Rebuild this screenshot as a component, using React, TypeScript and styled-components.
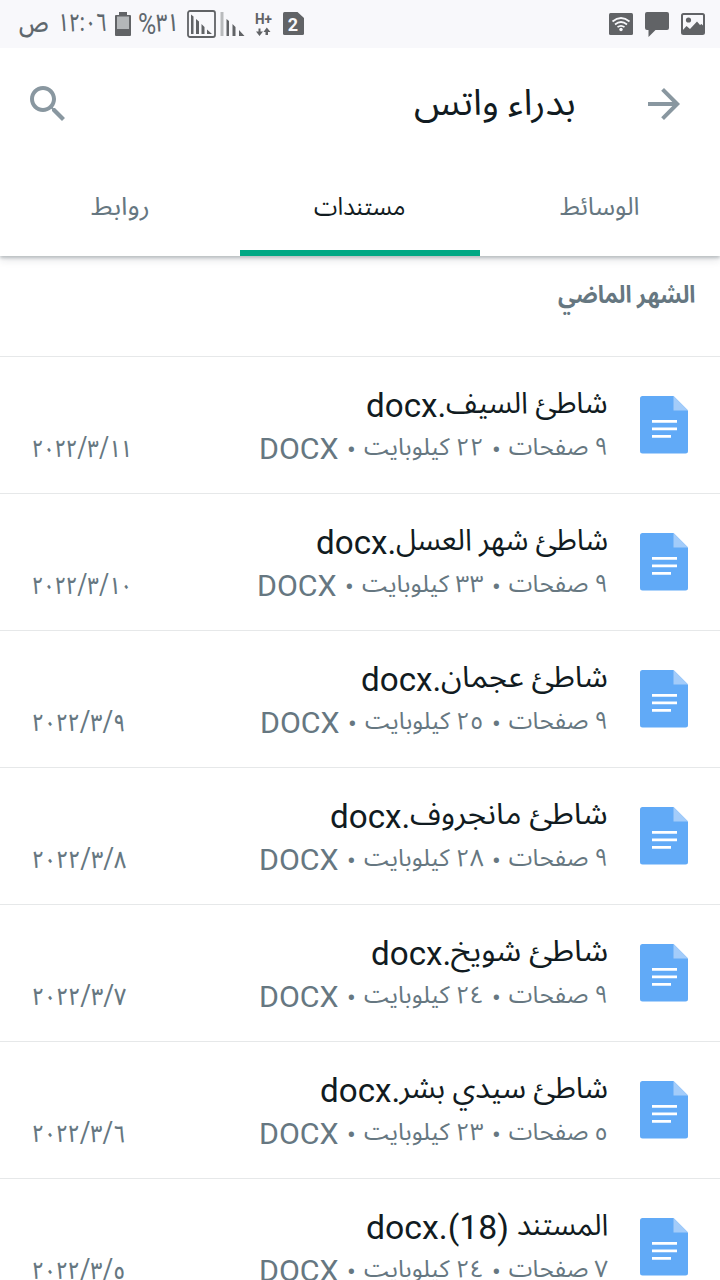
import React, { useLayoutEffect, useRef } from 'react';
import styled, { createGlobalStyle } from 'styled-components';

const Global = createGlobalStyle`
  * { box-sizing: border-box; }
  html, body { margin: 0; padding: 0; background: #fff; }
  body { font-family: Roboto, "Noto Sans Arabic", "Noto Naskh Arabic", "DejaVu Sans", sans-serif; overflow: hidden; }
`;

const Screen = styled.div`
  width: 720px; height: 1280px; overflow: hidden; background: #fff; direction: rtl;
  display: flex; flex-direction: column;
`;

const FitBox = styled.span<{ $w: number; $size?: number; $raise?: number; $spacing?: number }>`
  display: inline-block; flex: none; white-space: nowrap;
  width: ${p => p.$w}px;
  ${p => (p.$size ? `font-size: ${p.$size}px;` : '')}
  vertical-align: ${p => p.$raise || 0}px;
  letter-spacing: ${p => (p.$spacing ? `${p.$spacing}px` : 'normal')};
`;
const FitInner = styled.span`display: inline-block; transform-origin: 100% 50%;`;

type FitProps = { w: number; size?: number; raise?: number; spacing?: number; children: React.ReactNode };

// Squeezes or stretches a run of text to the given width.
function Fit({ w, size, raise, spacing, children }: FitProps) {
  const ref = useRef<HTMLSpanElement>(null);
  useLayoutEffect(() => {
    const el = ref.current;
    if (el && el.offsetWidth) el.style.transform = `scaleX(${w / el.offsetWidth})`;
  }, [w]);
  return (
    <FitBox $w={w} $size={size} $raise={raise} $spacing={spacing}>
      <FitInner ref={ref}>{children}</FitInner>
    </FitBox>
  );
}

const StatusBar = styled.div`
  height: 48px; flex: none; background: #f8f8fb; color: #616366; position: relative; z-index: 2;
  display: flex; align-items: center; justify-content: space-between; padding: 0 15px 0 19px;
`;
const Cluster = styled.div<{ $gap?: number }>`
  display: flex; align-items: center; height: 48px; gap: ${p => p.$gap || 0}px;
`;
const Slot = styled.div<{ $after: number }>`
  display: flex; flex: none; align-items: center; margin-left: ${p => p.$after}px;
`;
const StatusText = styled.div<{ $after: number }>`
  font-size: 25px; line-height: 46px; height: 48px; color: #5f686e; white-space: nowrap;
  font-weight: 500; margin-left: ${p => p.$after}px;
`;
const Percent = styled.span`font-weight: 400;`;
const Header = styled.header`
  height: 208px; flex: none; background: #fff; position: relative; z-index: 1;
  box-shadow: 0 2px 3px rgba(30,45,55,.24), 0 4px 8px rgba(30,45,55,.12);
`;
const TitleRow = styled.div`
  height: 112px; display: flex; align-items: center; padding: 0 32px 0 24px; color: #8997a0;
`;
const Title = styled.h1`
  flex: 1; margin: -3px 64px 0 0; font-size: 36px; line-height: 48px; font-weight: 400; color: #111b21;
`;
const Tabs = styled.nav`display: grid; grid-template-columns: repeat(3, 1fr); height: 96px;`;
const Tab = styled.div<{ $active?: boolean }>`
  display: flex; align-items: center; justify-content: center; font-size: 25px; padding-top: 4px;
  color: ${p => (p.$active ? '#111b21' : '#667781')};
  border-bottom: 6px solid ${p => (p.$active ? '#00a884' : 'transparent')};
`;
const Section = styled.h2`
  margin: 0; height: 100px; flex: none; padding: 20px 25px 0; font-size: 24px; line-height: 38px;
  font-weight: 700; color: #667781;
`;
const Row = styled.div`
  height: 137px; flex: none; border-top: 1px solid #e6e8e9; display: flex; padding: 39px 32px 0;
`;
const DocSvg = styled.svg`flex: none; display: block;`;
const Info = styled.div`flex: 1; margin: -15px 32px 0 0;`;
const Name = styled.div`font-size: 34px; line-height: 44px; height: 47px; color: #111b21; white-space: nowrap;`;
const Meta = styled.div`
  font-size: 30px; line-height: 38px; height: 38px; color: #667781; white-space: nowrap;
  display: flex; justify-content: space-between;
`;
const Dot = styled.span`
  display: inline-block; width: 25px; text-align: center; font-size: 26px;
`;
const DateText = styled.span`font-size: 24px; font-weight: 500;`;
const Slash = styled.span`font-size: 30px; font-weight: 400;`;

type Doc = {
  name: string; nameW: number; ext: string; extW: number;
  pages: string; size: string; sizeW: number; date: string[]; dateW: number;
};
const docs: Doc[] = [
  { name: 'شاطئ السيف', nameW: 162, ext: '.docx', extW: 80, pages: '٩', size: '٢٢', sizeW: 120, date: ['٢٠٢٢', '٣', '١١'], dateW: 100 },
  { name: 'شاطئ شهر العسل', nameW: 212, ext: '.docx', extW: 80, pages: '٩', size: '٣٣', sizeW: 122, date: ['٢٠٢٢', '٣', '١٠'], dateW: 100 },
  { name: 'شاطئ عجمان', nameW: 167, ext: '.docx', extW: 80, pages: '٩', size: '٢٥', sizeW: 119, date: ['٢٠٢٢', '٣', '٩'], dateW: 93 },
  { name: 'شاطئ مانجروف', nameW: 198, ext: '.docx', extW: 80, pages: '٩', size: '٢٨', sizeW: 120, date: ['٢٠٢٢', '٣', '٨'], dateW: 94 },
  { name: 'شاطئ شويخ', nameW: 157, ext: '.docx', extW: 80, pages: '٩', size: '٢٤', sizeW: 120, date: ['٢٠٢٢', '٣', '٧'], dateW: 94 },
  { name: 'شاطئ سيدي بشر', nameW: 208, ext: '.docx', extW: 80, pages: '٥', size: '٢٣', sizeW: 120, date: ['٢٠٢٢', '٣', '٦'], dateW: 93 },
  { name: 'المستند', nameW: 91, ext: '(18).docx', extW: 143, pages: '٧', size: '٢٤', sizeW: 120, date: ['٢٠٢٢', '٣', '٥'], dateW: 93 },
];

const DocIcon = () => (
  <DocSvg width="48" height="58" viewBox="0 0 48 58">
    <path d="M2.500 0H33.500L48 14.500V55Q48 57.500 45.500 57.500H2.500Q0 57.500 0 55V2.500Q0 0 2.500 0Z" fill="#61aaf7" />
    <path d="M33.500 0L48 14.500H33.500Z" fill="#a3ccfa" />
    <path d="M12 25.300H37M12 32.800H37M12 40.300H31" stroke="#fff" strokeWidth="2.800" />
  </DocSvg>
);

const Arrow = () => (
  <svg width="48" height="48" viewBox="0 0 24 24" fill="currentColor">
    <path d="M12 4l-1.410 1.410L16.170 11H4v2h12.170l-5.580 5.590L12 20l8-8z" />
  </svg>
);
const Search = () => (
  <svg width="48" height="48" viewBox="0 0 24 24" fill="currentColor">
    <path d="M15.500 14h-.79l-.28-.27C15.410 12.590 16 11.110 16 9.500 16 5.910 13.090 3 9.500 3S3 5.910 3 9.500 5.910 16 9.500 16c1.610 0 3.090-.59 4.230-1.570l.27.28v.79l5 4.990L20.490 19l-4.990-5zm-6 0C7.010 14 5 11.990 5 9.500S7.010 5 9.500 5 14 7.010 14 9.500 11.990 14 9.500 14z" />
  </svg>
);

const PictureIcon = () => (
  <svg width="24" height="28" viewBox="0 0 24 28">
    <rect x="1" y="4" width="22" height="20" rx="1.500" fill="none" stroke="currentColor" strokeWidth="2" />
    <circle cx="7.500" cy="10" r="2.600" fill="currentColor" />
    <path d="M1 21L5.500 16L9 19L16 11.500L19 15L20.500 14L23 16.500V24H1Z" fill="currentColor" />
  </svg>
);
const ChatIcon = () => (
  <svg width="24" height="28" viewBox="0 0 24 28">
    <path d="M2 2H22Q24 2 24 4V18Q24 20 22 20H10.500L3.500 27V20H2Q0 20 0 18V4Q0 2 2 2Z" fill="currentColor" />
  </svg>
);
const WifiIcon = () => (
  <svg width="24" height="28" viewBox="0 0 24 28">
    <rect x="0" y="3" width="24" height="22" rx="1.500" fill="currentColor" />
    <g fill="none" stroke="#f8f8fb" strokeWidth="1.700">
      <path d="M3.500 11.500Q12 4.500 20.500 11.500" />
      <path d="M6 14.500Q12 9.500 18 14.500" />
      <path d="M8.500 17.200Q12 14.500 15.500 17.200" />
    </g>
    <circle cx="12" cy="19.500" r="1.700" fill="#f8f8fb" />
  </svg>
);
const SimIcon = () => (
  <svg width="21" height="24" viewBox="0 0 21 24">
    <path d="M1.500 0H14.500L21 6V21.500Q21 23 19.500 23H1.500Q0 23 0 21.500V1.500Q0 0 1.500 0Z" fill="currentColor" />
    <text x="10" y="18.500" textAnchor="middle" fontFamily="Roboto, sans-serif" fontWeight="700" fontSize="18" fill="#f8f8fb">2</text>
  </svg>
);
const DataIcon = () => (
  <svg width="18" height="24" viewBox="0 0 18 24" direction="ltr">
    <text x="0" y="11.500" fontFamily="Roboto, sans-serif" fontWeight="700" fontSize="15" textLength="17" lengthAdjust="spacingAndGlyphs" fill="currentColor">H+</text>
    <path d="M3.500 16.500H5.500V19.500H8L4.500 24L1 19.500H3.500ZM10.500 23H13V20H15.500L11.800 15.500L8.500 20H10.500Z" fill="currentColor" />
  </svg>
);
const SignalIcon = () => (
  <svg width="25" height="24" viewBox="0 0 25 24">
    <rect x="0.500" y="0" width="3" height="24" fill="#b9bbbd" />
    <path d="M6.500 7L9 9V24H6.500ZM12.500 12L15.500 15V24H12.500ZM19 18L24.500 24H19Z" fill="currentColor" />
  </svg>
);
const BoxedSignalIcon = () => (
  <svg width="29" height="28" viewBox="0 0 29 28">
    <rect x="1" y="1" width="27" height="26" rx="2" fill="none" stroke="currentColor" strokeWidth="1.800" />
    <path d="M4 4.500L6.500 6.500V24H4ZM9 9L12 11.500V24H9ZM14.500 14L17.500 17V24H14.500ZM20 19.500L25 24H20Z" fill="currentColor" />
  </svg>
);
const BatteryIcon = () => (
  <svg width="16" height="24" viewBox="0 0 16 24">
    <path d="M4 0H12V3H15Q16 3 16 4V23Q16 24 15 24H1Q0 24 0 23V4Q0 3 1 3H4Z" fill="currentColor" />
    <rect x="2" y="4.500" width="12" height="12.500" fill="#b3b6b8" />
  </svg>
);

export default function App() {
  return (
    <Screen>
      <Global />
      <StatusBar>
        <Cluster $gap={12}><PictureIcon /><ChatIcon /><WifiIcon /></Cluster>
        <Cluster>
          <Slot $after={10}><SimIcon /></Slot>
          <Slot $after={10}><DataIcon /></Slot>
          <Slot $after={4}><SignalIcon /></Slot>
          <Slot $after={8}><BoxedSignalIcon /></Slot>
          <StatusText $after={7}>
            <Fit w={23} spacing={-1.5}>٣١</Fit>
            <Percent><Fit w={18} size={29} raise={-3}>%</Fit></Percent>
          </StatusText>
          <Slot $after={8}><BatteryIcon /></Slot>
          <StatusText $after={9}><Fit w={49} spacing={-1.5}>١٢:٠٦</Fit></StatusText>
          <StatusText $after={0}><Fit w={30}>ص</Fit></StatusText>
        </Cluster>
      </StatusBar>
      <Header>
        <TitleRow><Arrow /><Title><Fit w={162}>بدراء واتس</Fit></Title><Search /></TitleRow>
        <Tabs>
          <Tab><Fit w={80}>الوسائط</Fit></Tab>
          <Tab $active><Fit w={91}>مستندات</Fit></Tab>
          <Tab><Fit w={59}>روابط</Fit></Tab>
        </Tabs>
      </Header>
      <Section><Fit w={137}>الشهر الماضي</Fit></Section>
      {docs.map(d => (
        <Row key={d.name}>
          <DocIcon />
          <Info>
            <Name>
              <Fit w={d.nameW} size={30} raise={4}>{d.name}</Fit>
              {d.ext[0] === '(' ? ' ' : ''}
              <Fit w={d.extW}>{d.ext}</Fit>
            </Name>
            <Meta>
              <span>
                <Fit w={99} size={24} raise={4}>{d.pages} صفحات</Fit>
                <Dot>•</Dot>
                <Fit w={d.sizeW} size={24} raise={4}>{d.size} كيلوبايت</Fit>
                <Dot>•</Dot>
                <Fit w={80}>DOCX</Fit>
              </span>
              <DateText>
                <Fit w={d.dateW} spacing={-2}>
                  {d.date[0]}<Slash>/</Slash>{d.date[1]}<Slash>/</Slash>{d.date[2]}
                </Fit>
              </DateText>
            </Meta>
          </Info>
        </Row>
      ))}
    </Screen>
  );
}
